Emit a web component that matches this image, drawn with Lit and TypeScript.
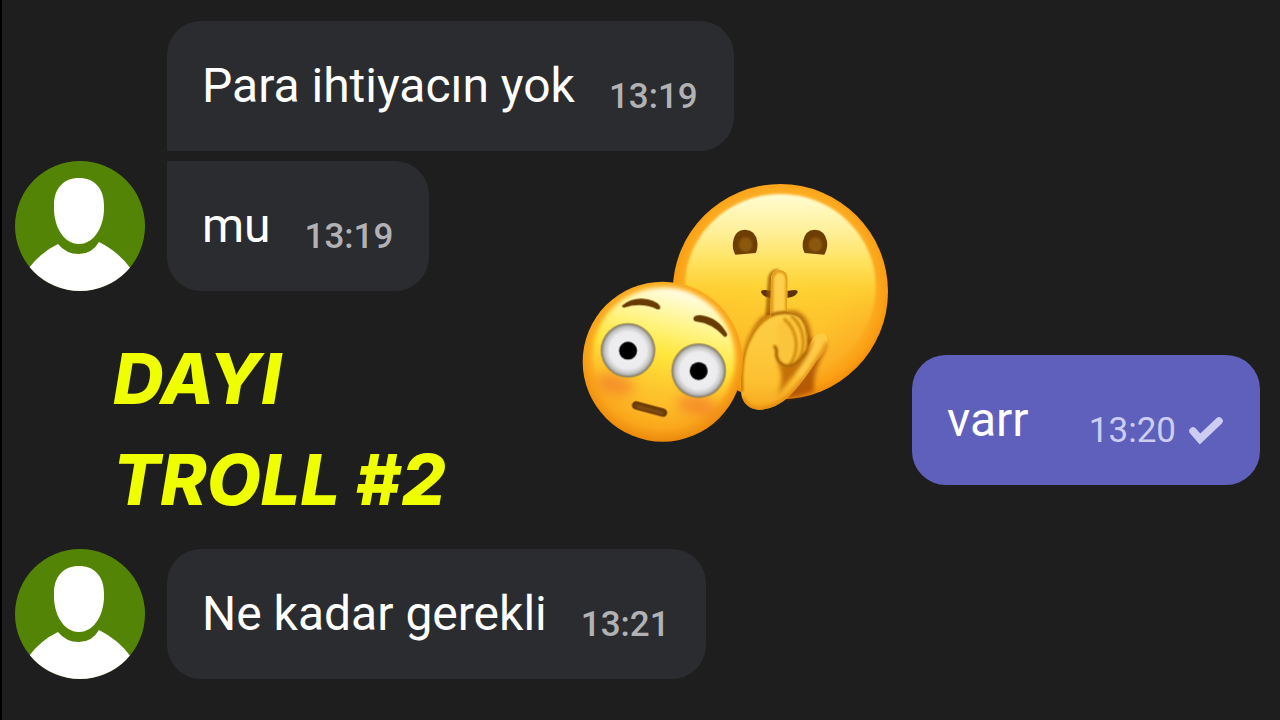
import { LitElement, html, css, svg, nothing } from "lit";
import { customElement, property } from "lit/decorators.js";

@customElement("chat-avatar")
class ChatAvatar extends LitElement {
  static styles = css`
    :host { display: block; width: 130px; height: 130px; }
    .pic { display: block; width: 100%; height: 100%; }
  `;
  render() {
    return html`<svg class="pic" viewBox="0 0 130 130" role="img" aria-label="Avatar">
      <defs><clipPath id="disc"><circle cx="65" cy="65" r="65" /></clipPath></defs>
      <circle cx="65" cy="65" r="65" fill="#548405" />
      <g clip-path="url(#disc)" fill="#fff">
        <path d="M64 17C79 17 89 27 89 44C90 64 80 83 64 83C48 83 38 64 39 44C39 27 49 17 64 17Z" />
        <path d="M14 107Q26 91 43 83Q51 93 64 93Q77 93 84 81Q104 91 116 108L116 132L14 132Z" />
      </g>
    </svg>`;
  }
}

@customElement("chat-message")
class ChatMessage extends LitElement {
  @property() text = "";
  @property() time = "";
  @property({ type: Boolean, reflect: true }) outgoing = false;
  @property({ reflect: true }) join = "";

  static styles = css`
    :host { display: block; }
    .bubble {
      box-sizing: border-box;
      display: flex;
      align-items: flex-end;
      justify-content: space-between;
      gap: 34px;
      min-height: 130px;
      padding: 36px 36px 37px 35px;
      border-radius: 34px;
      background: #2b2c2f;
      color: #fff;
      font-family: Roboto, sans-serif;
    }
    :host([join="below"]) .bubble { border-bottom-left-radius: 0; }
    :host([join="above"]) .bubble { border-top-left-radius: 0; }
    :host([outgoing]) .bubble { background: #5f60bb; min-width: 348px; }
    .text { font-size: 48px; line-height: 56px; }
    .meta {
      display: flex;
      align-items: center;
      gap: 12px;
      color: #b2b2b4;
      font-size: 35px;
      font-weight: 500;
      line-height: 34px;
    }
    :host([outgoing]) .meta { color: #cdcdf3; font-weight: 400; }
    .tick { width: 36px; height: 30px; }
  `;
  render() {
    return html`<div class="bubble">
      <span class="text">${this.text}</span>
      <span class="meta">
        <time>${this.time}</time>
        ${this.outgoing
          ? html`<svg class="tick" viewBox="0 0 36 30" role="img" aria-label="Gönderildi">
              <path d="M5 15L12 23L31 5" fill="none" stroke="currentColor" stroke-width="7.5" stroke-linecap="round" />
            </svg>`
          : nothing}
      </span>
    </div>`;
  }
}

@customElement("emoji-pair")
class EmojiPair extends LitElement {
  static styles = css`
    :host { display: block; width: 310px; }
    .art { display: block; width: 100%; }
  `;

  private hush() {
    return svg`<g transform="translate(660 170) scale(.33333)">
      <circle cx="361" cy="365" r="323" fill="url(#bigBase)" />
      <ellipse cx="361" cy="350" rx="286" ry="278" fill="url(#bigGlow)" filter="url(#soft4)" />
      <g fill="#6d3e03">
        <path d="M226 254Q216 236 219 216Q225 179 256 179Q288 181 292 216Q294 236 287 249Z" />
        <path d="M434 249Q425 234 429 214Q435 180 464 179Q495 180 501 214Q504 236 493 254Z" />
      </g>
      <g fill="#8b5810" filter="url(#soft4)">
        <ellipse cx="257" cy="224" rx="20" ry="22" />
        <ellipse cx="466" cy="224" rx="20" ry="22" />
      </g>
      <path d="M303 366Q303 359 316 360Q358 367 402 360Q415 359 413 367Q404 383 382 383L325 383Q308 380 303 366Z" fill="#5d3206" />
      <path d="M316 436L324 322Q331 297 356 297L345 440Z" fill="#9c5600" opacity=".75" filter="url(#soft4)" />
      <path d="M248 610Q246 515 300 446L330 426L400 422Q442 428 452 490Q452 522 490 505Q512 520 480 570Q458 620 462 664Q420 682 380 685Z" fill="#9e4200" opacity=".75" filter="url(#soft6)" />
      <path d="M331 434L333 330Q334 299 358 299Q383 301 383 330L381 426Q424 424 436 462Q448 502 442 536L459 504Q472 487 490 490Q507 499 502 522Q496 545 470 572Q430 635 385 682Q344 718 298 720Q247 714 243 665Q240 560 265 512Q285 458 331 434Z" fill="url(#hand)" />
      <g clip-path="url(#handShape)">
        <path d="M335 440L336 330Q338 305 358 302Q381 304 381 330L380 424" fill="none" stroke="#e0950f" stroke-width="9" filter="url(#soft4)" />
        <path d="M331 436Q355 426 383 428Q424 426 437 464Q449 502 440 541" fill="none" stroke="#a86200" stroke-width="9" filter="url(#soft4)" />
        <path d="M352 578Q395 600 425 566L459 502Q462 560 405 612Q380 640 350 680Q378 620 352 578Z" fill="#b96200" opacity=".85" filter="url(#soft6)" />
        <path d="M348 536Q356 500 350 470Q380 430 415 455Q450 500 432 552Q415 588 382 588Q352 585 348 536Z" fill="#fbc53a" filter="url(#soft4)" />
        <g fill="none" stroke-linecap="round" filter="url(#soft4)">
          <path d="M374 448Q406 474 409 522Q409 560 390 582" stroke="#d18a10" stroke-width="9" />
          <path d="M396 440Q428 466 430 515Q430 554 408 578" stroke="#d18a10" stroke-width="9" />
          <path d="M344 530Q352 536 349 556Q354 584 382 589Q416 586 440 545" stroke="#a65d00" stroke-width="9" />
        </g>
        <path d="M245 665Q240 560 267 510Q288 460 331 436" fill="none" stroke="#c57c05" stroke-width="11" filter="url(#soft4)" />
        <path d="M244 680Q255 718 298 719Q344 717 385 681Q430 634 470 571Q498 540 501 518" fill="none" stroke="#de850f" stroke-width="13" filter="url(#soft6)" />
        <path d="M478 510Q456 560 420 612" fill="none" stroke="#fecb4b" stroke-width="18" stroke-linecap="round" filter="url(#soft6)" />
      </g>
    </g>`;
  }

  private flushed() {
    const eye = (x: number, y: number) => svg`
      <circle cx=${x} cy=${y} r="82" fill="url(#eyeball)" />
      <circle cx=${x} cy=${y + 1} r="27" fill="#000" />`;
    return svg`<g transform="translate(570 270) scale(.33333)">
      <circle cx="278" cy="275" r="240" fill="url(#smallBase)" />
      <g transform="rotate(14 278 275)">
        <ellipse cx="278" cy="262" rx="214" ry="210" fill="url(#smallGlow)" filter="url(#soft6)" />
      </g>
      <g fill="#f2742c" opacity=".6" filter="url(#soft20)">
        <ellipse cx="135" cy="343" rx="58" ry="30" transform="rotate(14 135 343)" />
        <ellipse cx="382" cy="407" rx="62" ry="30" transform="rotate(14 382 407)" />
      </g>
      ${eye(174, 241)} ${eye(386, 302)}
      <g fill="#683b05">
        <path d="M156 107Q181 85 216 86Q255 88 270 108Q273 120 262 118Q214 96 163 113Q156 114 156 107Z" />
        <path d="M370 145Q373 135 390 135Q445 141 471 191Q473 201 464 201Q427 160 380 155Q370 153 370 145Z" />
      </g>
      <path d="M198 406L279 428" stroke="#683a04" stroke-width="25" stroke-linecap="round" />
      <path d="M200 409L277 430" stroke="#865019" stroke-width="10" stroke-linecap="round" filter="url(#soft4)" />
    </g>`;
  }

  render() {
    return html`<svg class="art" viewBox="580 180 310 265" role="img" aria-label="Emoji">
      <defs>
        <filter id="soft4" filterUnits="userSpaceOnUse" x="0" y="0" width="760" height="760"><feGaussianBlur stdDeviation="3.5" /></filter>
        <filter id="soft6" filterUnits="userSpaceOnUse" x="0" y="0" width="760" height="760"><feGaussianBlur stdDeviation="6" /></filter>
        <filter id="soft20" filterUnits="userSpaceOnUse" x="0" y="0" width="760" height="760"><feGaussianBlur stdDeviation="18" /></filter>
        <clipPath id="handShape">
          <path d="M331 434L333 330Q334 299 358 299Q383 301 383 330L381 426Q424 424 436 462Q448 502 442 536L459 504Q472 487 490 490Q507 499 502 522Q496 545 470 572Q430 635 385 682Q344 718 298 720Q247 714 243 665Q240 560 265 512Q285 458 331 434Z" />
        </clipPath>
        <radialGradient id="bigBase" cx=".5" cy=".47" r=".53">
          <stop offset="0" stop-color="#ffd02e" />
          <stop offset=".5" stop-color="#fec52d" />
          <stop offset=".8" stop-color="#fcb026" />
          <stop offset=".93" stop-color="#fb9e13" />
          <stop offset="1" stop-color="#f08c0c" />
        </radialGradient>
        <linearGradient id="bigGlow" x1="0" y1="0" x2="0" y2="1">
          <stop offset="0" stop-color="#fffcd2" />
          <stop offset=".2" stop-color="#fff09a" />
          <stop offset=".38" stop-color="#fee05a" />
          <stop offset=".52" stop-color="#fed233" stop-opacity=".85" />
          <stop offset=".72" stop-color="#fdc02a" stop-opacity=".4" />
          <stop offset="1" stop-color="#faa61c" stop-opacity="0" />
        </linearGradient>
        <radialGradient id="smallBase" cx=".5" cy=".45" r=".55">
          <stop offset="0" stop-color="#ffe233" />
          <stop offset=".55" stop-color="#fec42c" />
          <stop offset=".85" stop-color="#faa61c" />
          <stop offset="1" stop-color="#eb890c" />
        </radialGradient>
        <linearGradient id="smallGlow" x1="0" y1="0" x2="0" y2="1">
          <stop offset="0" stop-color="#fffde8" />
          <stop offset=".25" stop-color="#fff58a" />
          <stop offset=".48" stop-color="#ffe63a" />
          <stop offset=".75" stop-color="#fdc02e" stop-opacity=".6" />
          <stop offset="1" stop-color="#faa61c" stop-opacity="0" />
        </linearGradient>
        <radialGradient id="eyeball">
          <stop offset="0" stop-color="#f1f1f3" />
          <stop offset=".68" stop-color="#ececee" />
          <stop offset=".86" stop-color="#c3c3c3" />
          <stop offset=".96" stop-color="#8b8778" />
          <stop offset="1" stop-color="#9a7e33" />
        </radialGradient>
        <linearGradient id="hand" x1="0" y1="0" x2="0" y2="1">
          <stop offset="0" stop-color="#fed050" />
          <stop offset=".5" stop-color="#fdcb40" />
          <stop offset=".8" stop-color="#fdc030" />
          <stop offset="1" stop-color="#f6a81e" />
        </linearGradient>
      </defs>
      ${this.hush()} ${this.flushed()}
    </svg>`;
  }
}

@customElement("app-root")
class AppRoot extends LitElement {
  static styles = css`
    :host { display: block; }
    .screen {
      box-sizing: border-box;
      position: relative;
      min-height: 100vh;
      padding: 21px 20px 40px 13px;
      border-left: 2px solid #000;
      background: #1e1e1e;
      overflow: hidden;
    }
    .chat {
      display: flex;
      flex-direction: column;
      gap: 64px;
      margin: 0;
      padding: 0;
      list-style: none;
    }
    .group { display: flex; align-items: flex-end; gap: 22px; }
    .mine { justify-content: flex-end; }
    .stack { display: flex; flex-direction: column; align-items: flex-start; gap: 10px; }
    .title {
      position: absolute;
      left: 111px;
      top: 328px;
      margin: 0;
      color: #f0ff00;
      font: italic 800 70px/101px Inter, sans-serif;
    }
    .line { display: block; }
    .stickers { position: absolute; left: 578px; top: 180px; }
  `;
  render() {
    return html`<main class="screen">
      <ol class="chat">
        <li class="group">
          <chat-avatar></chat-avatar>
          <div class="stack">
            <chat-message text="Para ihtiyacın yok" time="13:19" join="below"></chat-message>
            <chat-message text="mu" time="13:19" join="above"></chat-message>
          </div>
        </li>
        <li class="group mine">
          <chat-message text="varr" time="13:20" outgoing></chat-message>
        </li>
        <li class="group">
          <chat-avatar></chat-avatar>
          <chat-message text="Ne kadar gerekli" time="13:21"></chat-message>
        </li>
      </ol>
      <h1 class="title"><span class="line">DAYI</span><span class="line">TROLL #2</span></h1>
      <emoji-pair class="stickers"></emoji-pair>
    </main>`;
  }
}
